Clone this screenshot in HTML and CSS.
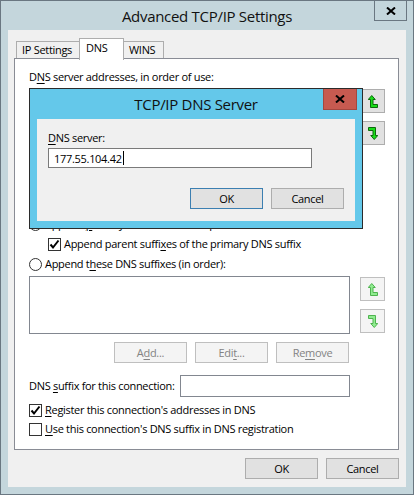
FILE: index.html
```html
<!DOCTYPE html>
<html>
<head>
<meta charset="utf-8">
<link rel="stylesheet" href="styles.css">
</head>
<body>
<svg class="defs" width="0" height="0">
  <defs>
    <symbol id="arr-up" viewBox="0 0 10 13">
      <path d="M3.75 0.5 L7.25 4.5 L5 4.5 L5 9.5 L9.5 9.5 L9.5 12.5 L2.5 12.5 L2.5 4.5 L0.25 4.5 Z"/>
    </symbol>
    <symbol id="arr-down" viewBox="0 0 10 13">
      <path transform="rotate(180 5 6.5)" d="M3.75 0.5 L7.25 4.5 L5 4.5 L5 9.5 L9.5 9.5 L9.5 12.5 L2.5 12.5 L2.5 4.5 L0.25 4.5 Z"/>
    </symbol>
    <symbol id="chk" viewBox="0 0 11 11">
      <path d="M1.5 5.5 L4 8.5 L9.5 1.5" fill="none" stroke="#000" stroke-width="2"/>
    </symbol>
    <symbol id="xglyph" viewBox="0 0 10 8">
      <path d="M1 0.5 L9 7.5 M9 0.5 L1 7.5" stroke="#000" stroke-width="2" fill="none"/>
    </symbol>
  </defs>
</svg>
<div class="window">
  <div class="titlebar"><span class="title">Advanced TCP/IP Settings</span></div>
  <div class="caption-close"><svg class="x" width="10" height="8"><use href="#xglyph"/></svg></div>
  <div class="client">
    <div class="tabs">
      <div class="tab tab-ip">IP Settings</div>
      <div class="tab tab-active">DNS</div>
      <div class="tab tab-wins">WINS</div>
    </div>
    <div class="panel">
      <div class="lbl">D<u>N</u>S server addresses, in order of use:</div>
      <div class="listrow">
        <div class="listbox listbox-tall"></div>
        <div class="arrows">
          <div class="arrowbtn"><svg class="arr" width="10" height="13"><use href="#arr-up"/></svg></div>
          <div class="arrowbtn"><svg class="arr" width="10" height="13"><use href="#arr-down"/></svg></div>
        </div>
      </div>
      <div class="btnrow" aria-hidden="true">
        <div class="btn"></div>
        <div class="btn"></div>
        <div class="btn"></div>
      </div>
      <div class="optrow opt-primary">
        <span class="radio"></span><span class="opttext">Append <u>p</u>rimary and connection specific DNS suffixes</span>
      </div>
      <div class="optrow opt-parent">
        <span class="checkbox"><svg class="chk" width="11" height="11"><use href="#chk"/></svg></span><span class="opttext">Append parent suffi<u>x</u>es of the primary DNS suffix</span>
      </div>
      <div class="optrow opt-these">
        <span class="radio"></span><span class="opttext">Append t<u>h</u>ese DNS suffixes (in order):</span>
      </div>
      <div class="listrow listrow-low">
        <div class="listbox listbox-short"></div>
        <div class="arrows">
          <div class="arrowbtn disabled"><svg class="arr" width="10" height="13"><use href="#arr-up"/></svg></div>
          <div class="arrowbtn disabled"><svg class="arr" width="10" height="13"><use href="#arr-down"/></svg></div>
        </div>
      </div>
      <div class="btnrow">
        <div class="btn disabled">A<u>d</u>d...</div>
        <div class="btn disabled">Edi<u>t</u>...</div>
        <div class="btn disabled">Re<u>m</u>ove</div>
      </div>
      <div class="suffixrow">
        <span class="lbl">DNS <u>s</u>uffix for this connection:</span>
        <div class="textbox suffixbox"></div>
      </div>
      <div class="optrow opt-register">
        <span class="checkbox"><svg class="chk" width="11" height="11"><use href="#chk"/></svg></span><span class="opttext"><u>R</u>egister this connection's addresses in DNS</span>
      </div>
      <div class="optrow opt-use">
        <span class="checkbox"></span><span class="opttext"><u>U</u>se this connection's DNS suffix in DNS registration</span>
      </div>
    </div>
    <div class="footer">
      <div class="btn">OK</div>
      <div class="btn">Cancel</div>
    </div>
  </div>

  <div class="dialog">
    <div class="dlg-title"><span class="dlg-title-text">TCP/IP DNS Server</span></div>
    <div class="dlg-close"><svg class="x" width="10" height="8"><use href="#xglyph"/></svg></div>
    <div class="dlg-client">
      <div class="lbl"><u>D</u>NS server:</div>
      <div class="textbox dlg-input"><span>177.55.104.42</span><span class="caret"></span></div>
      <div class="dlg-buttons">
        <div class="btn btn-default">OK</div>
        <div class="btn">Cancel</div>
      </div>
    </div>
  </div>
</div>
</body>
</html>
```
FILE: styles.css
```css
* { box-sizing: border-box; }
html, body { margin: 0; padding: 0; }
body {
  width: 414px;
  height: 495px;
  overflow: hidden;
  font-family: "Segoe UI", "Open Sans", sans-serif;
  font-size: 11px;
  letter-spacing: -0.3px;
  color: #000;
  background: #c4d6dc;
}
.defs { position: absolute; width: 0; height: 0; }
u { text-decoration: underline; text-underline-offset: 2px; }

.window {
  position: relative;
  width: 414px;
  height: 495px;
  background: #c4d6dc;
  border: 1px solid #6a7781;
  display: flex;
  flex-direction: column;
  padding: 0 7px 7px 7px;
}
.titlebar {
  height: 29px;
  display: flex;
  align-items: center;
  justify-content: center;
  font-size: 15px;
  letter-spacing: -0.3px;
  color: #111;
}
.caption-close {
  position: absolute;
  top: -1px;
  right: 6px;
  width: 33px;
  height: 21px;
  border: 1px solid #6a7781;
  background: #c4d6dc;
  display: flex;
  align-items: center;
  justify-content: center;
}
.x { display: block; }

.client {
  flex: 1;
  background: #f0f0f0;
  padding: 8px 7px 8px 6px;
  display: flex;
  flex-direction: column;
}
.tabs {
  height: 20px;
  display: flex;
  align-items: flex-end;
  margin-left: 2px;
}
.tab {
  height: 17px;
  border: 1px solid #adadad;
  border-bottom: none;
  background: #f0f0f0;
  line-height: 16px;
  padding-left: 5px;
  white-space: nowrap;
}
.tab-ip { width: 65px; margin-right: -2px; }
.tab-active {
  position: relative;
  z-index: 1;
  width: 45px;
  height: 22px;
  margin-bottom: -2px;
  background: #fff;
  line-height: 17px;
  padding-left: 6px;
}
.tab-wins { width: 42px; margin-left: -2px; padding-left: 6px; }

.panel {
  height: 392px;
  background: #fff;
  border: 1px solid #898c95;
  padding: 10px 13px 0 14px;
  display: flex;
  flex-direction: column;
}
.lbl { height: 16px; line-height: 16px; white-space: nowrap; }

.listrow { display: flex; margin-top: 3px; }
.listrow-low { margin-top: 4px; }
.listbox {
  width: 321px;
  border: 1px solid #828790;
  background: #fff;
}
.listbox-tall { height: 98px; }
.listbox-short { height: 58px; }
.arrows {
  margin-left: 10px;
  margin-top: 1px;
  display: flex;
  flex-direction: column;
  gap: 8px;
}
.arrowbtn {
  width: 25px;
  height: 24px;
  border: 1px solid #adadad;
  background: #e1e1e1;
  display: flex;
  align-items: center;
  justify-content: center;
}
.arr { display: block; fill: #19dc19; stroke: #0b6a0b; stroke-width: 1; }
.arrowbtn.disabled { background: #f4f4f4; border-color: #bfbfbf; }
.arrowbtn.disabled .arr { fill: #90ec90; stroke: #4fb34f; }

.btnrow {
  width: 321px;
  margin-top: 8px;
  display: flex;
  justify-content: flex-end;
  gap: 8px;
  padding-right: 1px;
}
.btn {
  width: 73px;
  height: 21px;
  border: 1px solid #adadad;
  background: #e1e1e1;
  display: flex;
  align-items: center;
  justify-content: center;
  line-height: 16px;
}
.btn.disabled { background: #f4f4f4; border-color: #bfbfbf; color: #838383; }

.optrow {
  height: 16px;
  display: flex;
  align-items: center;
  white-space: nowrap;
}
.opt-primary { margin-top: 1px; }
.opt-parent { margin-top: 4px; padding-left: 19px; }
.opt-these { margin-top: 4px; }
.opt-register { margin-top: 5px; }
.opt-use { margin-top: 3px; }
.radio {
  width: 13px;
  height: 13px;
  border: 1px solid #333;
  border-radius: 50%;
  background: #fff;
  flex: none;
}
.checkbox {
  width: 13px;
  height: 13px;
  border: 1px solid #333;
  background: #fff;
  flex: none;
  display: flex;
  align-items: center;
  justify-content: center;
}
.chk { display: block; }
.opttext { margin-left: 3px; line-height: 16px; }

.suffixrow {
  width: 321px;
  margin-top: 12px;
  display: flex;
  align-items: center;
  justify-content: space-between;
}
.textbox {
  border: 1px solid #7a7a7a;
  background: #fff;
}
.suffixbox { width: 170px; height: 22px; border-color: #828790; }

.footer {
  margin-top: 8px;
  display: flex;
  justify-content: flex-end;
  gap: 8px;
}

.dialog {
  position: absolute;
  left: 28px;
  top: 87px;
  width: 334px;
  height: 141px;
  border: 1px solid #2b2b2b;
  background: #64c8ea;
  display: flex;
  flex-direction: column;
  padding: 0 7px 7px 7px;
}
.dlg-title {
  height: 30px;
  display: flex;
  align-items: center;
  justify-content: center;
  font-size: 15px;
  letter-spacing: -0.3px;
  color: #111;
  padding-bottom: 1px;
}
.dlg-close {
  position: absolute;
  top: 0;
  left: 293px;
  width: 34px;
  height: 21px;
  background: #c75a50;
  border: 1px solid #a4473f;
  border-top: none;
  display: flex;
  align-items: center;
  justify-content: center;
}
.dlg-client {
  flex: 1;
  background: #f0f0f0;
  padding: 11px 11px 0 11px;
  display: flex;
  flex-direction: column;
}
.dlg-input {
  margin-top: 2px;
  width: 264px;
  height: 20px;
  display: flex;
  align-items: center;
  padding-left: 5px;
  border-color: #7a7a7a;
}
.caret {
  width: 1px;
  height: 14px;
  background: #000;
  margin-left: 1px;
}
.dlg-buttons {
  margin-top: 20px;
  display: flex;
  justify-content: flex-end;
  gap: 8px;
}
.btn-default { border-color: #3c7fb1; }
```
